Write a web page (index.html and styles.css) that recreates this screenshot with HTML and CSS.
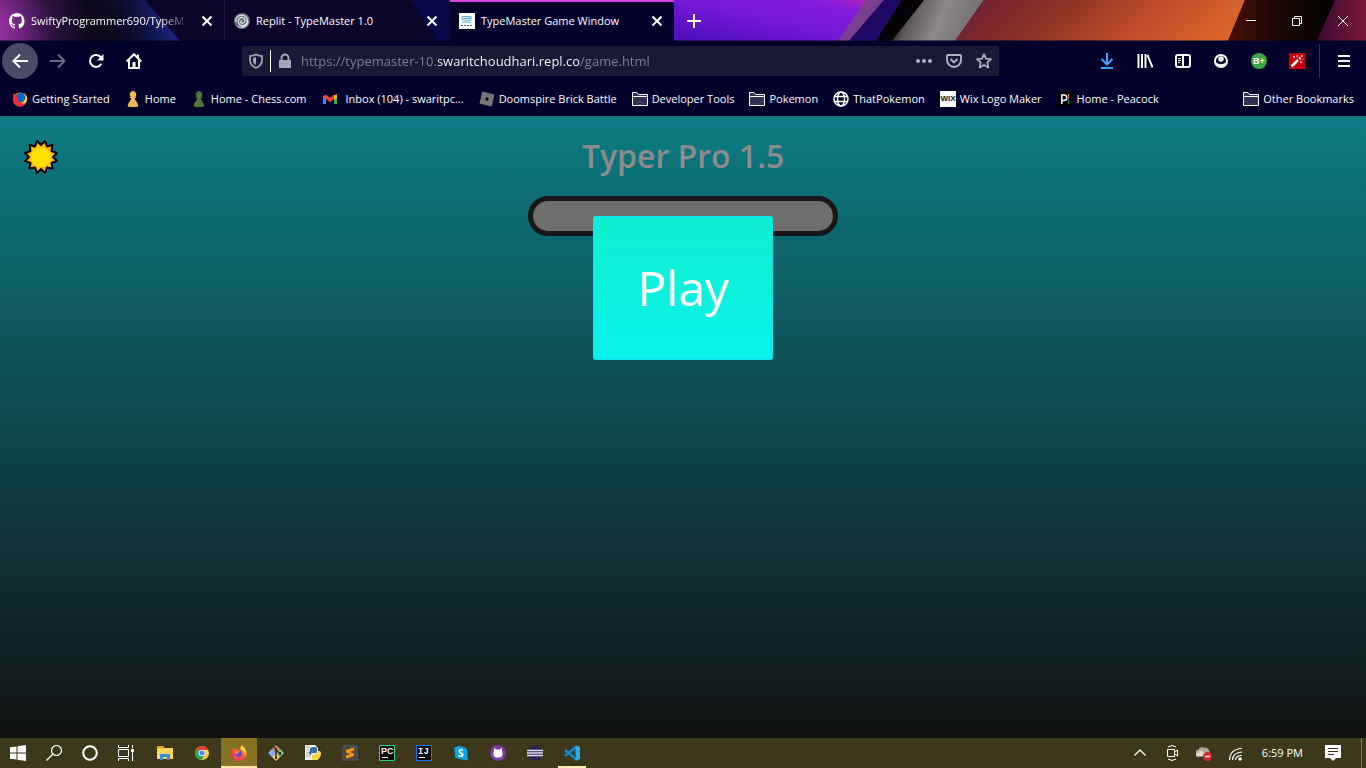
FILE: index.html
```html
<!DOCTYPE html>
<html lang="en">
<head>
<meta charset="utf-8">
<title>TypeMaster Game Window</title>
<link rel="stylesheet" href="styles.css">
</head>
<body>
<svg class="defs" aria-hidden="true">
  <defs>
    <linearGradient id="fire" x1="0" y1="1" x2="1" y2="0"><stop offset="0" stop-color="#f0258c"/><stop offset=".5" stop-color="#ff5a2c"/><stop offset="1" stop-color="#ffdf30"/></linearGradient>
    <symbol id="close" viewBox="0 0 16 16"><path d="M3.500 3.500 12.500 12.500M12.500 3.500 3.500 12.500" fill="none" stroke="#fff" stroke-width="2"/></symbol>
    <symbol id="folder" viewBox="0 0 16 16"><path d="M.5 14.500V1.500H5L6.500 3.500H15.500V14.500Z" fill="#33305a" stroke="#fff"/><path d="M.5 5.500H15.500" stroke="#fff"/></symbol>
    <symbol id="pawn" viewBox="0 0 16 16"><path d="M8 0a3.400 3.400 0 0 1 2.500 5.600L11.500 7H9.800C10 10 13 11 13.300 15.500Q8 17 2.700 15.500C3 11 6 10 6.200 7H4.500L5.500 5.600A3.400 3.400 0 0 1 8 0Z"/></symbol>
    <symbol id="firefox" viewBox="0 0 16 16"><path d="M.3 8.500C.3 5.500 1.500 3.500 2.500 2.500L3.500 4.500 5.500 3.200 6.500 5 9 4.500C8.500 2.500 10 1 11.500.2 12 2.500 15.800 4.500 15.800 8.500A7.700 7.400 0 0 1 .3 8.500Z" fill="url(#fire)"/><circle cx="8.200" cy="8.800" r="3.200" fill="#7b45d8"/><path d="M3.500 6C6 4.800 7.500 6.300 9 6.500 8 7.800 6.800 7.300 6.600 9 4.500 9 3.500 8 3.500 6Z" fill="#ff9a28"/><path d="M11.500.2C12 2.500 15.500 4.500 15 9 14.300 7 13 5.500 10 4.500 9.500 3 10.300 1 11.500.2Z" fill="#ffe047"/></symbol>
  </defs>
</svg>

<header class="browser">
  <div class="titlebar">
    <svg class="theme" viewBox="0 0 1366 41" preserveAspectRatio="none" aria-hidden="true">
      <defs>
        <radialGradient id="pink" gradientUnits="userSpaceOnUse" cx="-15" cy="30" r="105"><stop offset="0" stop-color="#b63bbd"/><stop offset=".3" stop-color="#782785"/><stop offset=".65" stop-color="#2b1240"/><stop offset="1" stop-color="#0b0718"/></radialGradient>
        <linearGradient id="blueedge" gradientUnits="userSpaceOnUse" x1="100" y1="35" x2="165" y2="12"><stop offset="0" stop-color="#0a0820" stop-opacity="0"/><stop offset="1" stop-color="#17257e"/></linearGradient>
        <linearGradient id="violet" x1="0" y1="1" x2="1" y2="0"><stop offset="0" stop-color="#4b0fb8"/><stop offset=".5" stop-color="#7318d5"/><stop offset=".85" stop-color="#881bdc"/><stop offset="1" stop-color="#b226b8"/></linearGradient>
        <linearGradient id="orange" x1="0" y1="0" x2="1" y2=".15"><stop offset="0" stop-color="#6d1d36"/><stop offset=".35" stop-color="#863025"/><stop offset=".7" stop-color="#bd4b29"/><stop offset="1" stop-color="#d7632b"/></linearGradient>
        <linearGradient id="silver" gradientUnits="userSpaceOnUse" x1="893" y1="10" x2="965" y2="40"><stop offset="0" stop-color="#080808"/><stop offset=".25" stop-color="#5d595c"/><stop offset=".6" stop-color="#8d898b"/><stop offset="1" stop-color="#757174"/></linearGradient>
        <linearGradient id="ember" x1="0" x2="1"><stop offset="0" stop-color="#4b1008"/><stop offset=".5" stop-color="#170502"/><stop offset="1" stop-color="#030101"/></linearGradient>
        <linearGradient id="wine" x1="0" x2="1"><stop offset="0" stop-color="#3b0932"/><stop offset="1" stop-color="#7a1838"/></linearGradient>
      </defs>
      <path fill="#0c0329" d="M0 0H1366V41H0Z"/>
      <path fill="url(#pink)" d="M0 0H145L180 41H0Z"/>
      <path fill="url(#blueedge)" d="M70 0H145L180 41H70Z"/>
      <path fill="#080846" d="M410 0H450V41H437Z"/>
      <path fill="url(#violet)" d="M674 0H870L840 41H674Z"/>
      <path fill="#7a4090" d="M866 0H884L849 41H838Z"/>
      <path fill="#210765" d="M884 0H902L876 41H849Z"/>
      <path fill="#060307" d="M902 0H935L910 41H876Z"/>
      <path fill="url(#silver)" d="M924 0H984L955 41H892Z"/>
      <path fill="url(#orange)" d="M984 0H1245L1228 41H955Z"/>
      <path fill="url(#ember)" d="M1245 0H1335L1317 41H1228Z"/>
      <path fill="url(#wine)" d="M1335 0H1366V41H1317Z"/>
      <path stroke="#1b1440" d="M224.500 0V41"/>
      <path stroke="#09051f" stroke-opacity=".5" d="M0 40.500H1366"/>
    </svg>
    <div class="tabs" role="tablist">
      <div class="tab" role="tab">
        <svg class="i16" viewBox="0 0 16 16"><path fill="#fff" d="M8 0C3.580 0 0 3.580 0 8c0 3.540 2.290 6.530 5.470 7.590.4.070.55-.17.55-.38v-1.500c-2 .4-2.600-.5-2.800-1-.1-.3-.6-1-.9-1.200-.3-.2-.7-.6 0-.6.6 0 1.100.6 1.200.8.7 1.200 1.900.9 2.300.7.1-.5.300-.9.500-1.100-1.800-.2-3.600-.9-3.600-4 0-.9.300-1.600.8-2.100-.1-.2-.4-1 .1-2.100 0 0 .7-.2 2.200.8a7.500 7.500 0 0 1 4 0c1.500-1 2.200-.8 2.200-.8.4 1.100.2 1.900.1 2.100.5.600.8 1.300.8 2.100 0 3.100-1.900 3.800-3.700 4 .3.300.6.700.6 1.500v2.200c0 .2.100.5.600.4A8 8 0 0 0 8 0Z"/></svg>
        <span class="tab-title fade">SwiftyProgrammer690/TypeM</span>
        <button class="tab-close" aria-label="Close tab"><svg class="i16"><use href="#close"/></svg></button>
      </div>
      <div class="tab" role="tab">
        <svg class="i16" viewBox="0 0 16 16"><circle cx="8" cy="8" r="8" fill="#65727d"/><path d="M2 9C1 4 6 1 10 2.500S14.500 10 11 12 4 11.500 4.300 8 8 3.500 10 5.300 10.800 10 8.500 10.300 6.300 8.500 7.500 7.500M4 13.500C8 15.500 14 13 14 8" fill="none" stroke="#dfe5e8" stroke-width="1.200"/></svg>
        <span class="tab-title">Replit - TypeMaster 1.0</span>
        <button class="tab-close" aria-label="Close tab"><svg class="i16"><use href="#close"/></svg></button>
      </div>
      <div class="tab active" role="tab" aria-selected="true">
        <svg class="i16" viewBox="0 0 16 16"><path fill="#fff" d="M0 0H16V16H0Z"/><path d="M3 3.500H11L13 4.500 10.500 6M3 4C2 7 5 8.500 9 8 11 8 13 7 11.500 5.500H4" fill="#d3edf6" stroke="#58a9cb"/><path d="M3 9.500H12" stroke="#8ccbe2"/><path d="M2 12.500H14" stroke="#345d87" stroke-dasharray="2 1"/></svg>
        <span class="tab-title">TypeMaster Game Window</span>
        <button class="tab-close" aria-label="Close tab"><svg class="i16"><use href="#close"/></svg></button>
      </div>
    </div>
    <button class="new-tab" aria-label="New tab"><svg class="i16" viewBox="0 0 16 16"><path d="M8 1V15M1 8H15" stroke="#fff" stroke-width="2"/></svg></button>
    <div class="window-controls">
      <button aria-label="Minimize"><svg class="i16" viewBox="0 0 16 16"><path d="M3 7.500H13" stroke="#fff"/></svg></button>
      <button aria-label="Restore"><svg class="i16" viewBox="0 0 16 16"><path d="M3.500 5.500H10.500V12.500H3.500ZM5.500 5V3.500H12.500V10.500H11" fill="none" stroke="#fff"/></svg></button>
      <button aria-label="Close window"><svg class="i16" viewBox="0 0 16 16"><path d="M3 3 13 13M13 3 3 13" stroke="#fff"/></svg></button>
    </div>
  </div>

  <nav class="toolbar" aria-label="Navigation">
    <button class="tool back" aria-label="Back"><svg class="i16" viewBox="0 0 16 16"><path d="M8 1.500 1.500 8 8 14.500M1.500 8H16" fill="none" stroke="#fff" stroke-width="2"/></svg></button>
    <button class="tool" aria-label="Forward"><svg class="i16" viewBox="0 0 16 16"><path d="M8 1.500 14.500 8 8 14.500M14.500 8H0" fill="none" stroke="#6b6b83" stroke-width="2"/></svg></button>
    <button class="tool" aria-label="Reload"><svg class="i16" viewBox="0 0 16 16"><path d="M13 4.500A6 6 0 1 0 13.300 10.800" fill="none" stroke="#fff" stroke-width="2"/><path d="M15.500 1V7.500H9Z" fill="#fff"/></svg></button>
    <button class="tool" aria-label="Home"><svg class="i16" viewBox="0 0 16 16"><path d="M.7 8.500 8 1.200 15.300 8.500M3 7V15H13V7" fill="none" stroke="#fff" stroke-width="2"/><path d="M6.500 15V9H9.500V15ZM11 1.500H13V6L11 4Z" fill="#fff"/></svg></button>
    <div class="urlbar">
      <svg class="i16" viewBox="0 0 16 16"><path d="M8 1.500C10 2.500 12 3 14 3V7C14 11 11.500 13.500 8 15 4.500 13.500 2 11 2 7V3C4 3 6 2.500 8 1.500Z" fill="none" stroke="#a5a5b5" stroke-width="1.700"/><path d="M8 4 5 5V7.500C5 9.500 6 11 8 12Z" fill="#a5a5b5"/></svg>
      <span class="url-divider"></span>
      <svg class="i16" viewBox="0 0 16 16"><path d="M2 7H14V15H2Z" fill="#a5a5b5"/><path d="M4.500 8V5a3.500 3.500 0 0 1 7 0V8" fill="none" stroke="#a5a5b5" stroke-width="2"/></svg>
      <input class="url" type="text" aria-label="Address" value="https://typemaster-10.swaritchoudhari.repl.co/game.html">
      <div class="url-actions">
        <button aria-label="Page actions"><svg class="i16" viewBox="0 0 16 16"><g fill="#b1b1bf"><circle cx="2" cy="8" r="2"/><circle cx="8" cy="8" r="2"/><circle cx="14" cy="8" r="2"/></g></svg></button>
        <button aria-label="Save to Pocket"><svg class="i16" viewBox="0 0 16 16"><path d="M2 2H14Q15 2 15 3V7A7 7 0 0 1 1 7V3Q1 2 2 2ZM4.500 6 8 9.500 11.500 6" fill="none" stroke="#b1b1bf" stroke-width="1.900"/></svg></button>
        <button aria-label="Bookmark this page"><svg class="i16" viewBox="0 0 16 16"><path d="M8 1.300 10 5.700 15 6.200 11.300 9.600 12.300 14.500 8 12 3.700 14.500 4.700 9.600 1 6.200 6 5.700Z" fill="none" stroke="#b1b1bf" stroke-width="1.800" stroke-linejoin="round"/></svg></button>
      </div>
    </div>
    <button class="tool" aria-label="Downloads"><svg class="i16" viewBox="0 0 16 16"><path d="M8 0V11M2.500 6 8 11.500 13.500 6M2 15H14" fill="none" stroke="#3ea3ff" stroke-width="2"/></svg></button>
    <button class="tool" aria-label="Library"><svg class="i16" viewBox="0 0 16 16"><path d="M1.500 1V15M5 1V15M8.500 1V15M10.500 2 15.500 14.500" stroke="#fff" stroke-width="2"/></svg></button>
    <button class="tool" aria-label="Sidebars"><svg class="i16" viewBox="0 0 16 16"><rect x="1" y="2" width="14" height="12" rx="2" fill="none" stroke="#fff" stroke-width="2"/><path d="M8 2V14" stroke="#fff" stroke-width="2"/><path d="M3 5.500H6M3 7.500H6M3 9.500H5" stroke="#fff"/></svg></button>
    <button class="tool" aria-label="Account"><svg class="i16" viewBox="0 0 16 16"><circle cx="8" cy="8" r="6" fill="none" stroke="#fff" stroke-width="2"/><circle cx="8" cy="6" r="2.800" fill="#fff"/><path d="M3 9.500Q8 13 13 9.500Q12 13.500 8 13.500T3 9.500Z" fill="#fff"/></svg></button>
    <button class="tool" aria-label="B+ extension"><svg class="i16" viewBox="0 0 16 16"><circle cx="8" cy="8" r="8" fill="#3ba648"/><text x="8" y="11" text-anchor="middle" class="badge-text">B+</text></svg></button>
    <button class="tool" aria-label="Magic extension"><svg class="i16" viewBox="0 0 16 16"><path d="M0 0H16V16H0Z" fill="#c60000"/><path d="M2.500 13.500 9 7" stroke="#fff" stroke-width="2.500"/><path d="M10 6 11.500 4.500" stroke="#fff" stroke-width="2.500"/><path d="M5 3V5M4 4H6M8 2V4M13 2V4M12 3H14M12 8V10M11 9H13M14 6V7" stroke="#ffcaca"/></svg></button>
    <span class="tool-divider"></span>
    <button class="tool" aria-label="Open menu"><svg class="i16" viewBox="0 0 16 16"><path d="M2 3H14M2 8H14M2 13H14" stroke="#fff" stroke-width="2"/></svg></button>
  </nav>

  <nav class="bookmarks" aria-label="Bookmarks">
    <a href="#"><svg class="i16" viewBox="0 0 16 16"><circle cx="8" cy="8.500" r="7" fill="#ff8519"/><circle cx="8.500" cy="7" r="5" fill="#0866cc"/><path d="M2 2C1 5 0 9 2 12 5 17 12 16 14 12 12 13 9.500 12 9 11 6 11.500 5 9 7.500 8 5.500 8 4 6 5.500 5 4 4 3 4 2 2Z" fill="#ed2b3c"/><path d="M11 1C15 5 14 10 9 12 13 14 16 10 15 6Q14 3 11 1Z" fill="#ffc921"/></svg>Getting Started</a>
    <a href="#"><svg class="i16 gold"><use href="#pawn"/></svg>Home</a>
    <a href="#"><svg class="i16 green"><use href="#pawn"/></svg>Home - Chess.com</a>
    <a href="#" class="mail"><svg class="i16" viewBox="0 0 16 16"><path d="M1 4V13H4V7Z" fill="#4285f4"/><path d="M12 7V13H15V4Z" fill="#34a853"/><path d="M2.500 4.500 8 9 13.500 4.500" fill="none" stroke="#ea4335" stroke-width="3.500"/><path d="M12 5 15 3V7L12 9Z" fill="#fbbc04"/></svg>Inbox (104) - swaritpc...</a>
    <a href="#"><svg class="i16" viewBox="0 0 16 16"><path d="M3.300.5 15.500 3.500 12.700 15.500.5 12.500Z" fill="#777"/><path d="M7 6.200 9.800 7 9 9.800 6.200 9Z" fill="#00002a"/></svg>Doomspire Brick Battle</a>
    <a href="#"><svg class="i16"><use href="#folder"/></svg>Developer Tools</a>
    <a href="#"><svg class="i16"><use href="#folder"/></svg>Pokemon</a>
    <a href="#"><svg class="i16" viewBox="0 0 16 16"><g fill="none" stroke="#fff" stroke-width="1.500"><circle cx="8" cy="8" r="7"/><ellipse cx="8" cy="8" rx="3.500" ry="7"/><path d="M1.500 5.500H14.500M1.500 10.500H14.500"/></g></svg>ThatPokemon</a>
    <a href="#"><svg class="i16" viewBox="0 0 16 16"><path fill="#fff" d="M0 0H16V16H0Z"/><text x="8" y="10" text-anchor="middle" class="wix-text">WIX</text></svg>Wix Logo Maker</a>
    <a href="#"><svg class="i16" viewBox="0 0 16 16"><path d="M0 0H16V16H0Z"/><path d="M4.800 13V4H7A2.500 2.500 0 0 1 7 9.500H5" fill="none" stroke="#fff" stroke-width="1.500"/><path d="M11.500 3V5" stroke="#e7b33a"/><path d="M11.500 5V7" stroke="#e24a33"/><path d="M11.500 7V9" stroke="#7649b8"/><path d="M11.500 9V11" stroke="#208cc8"/><path d="M11.500 11V13" stroke="#32a45c"/></svg>Home - Peacock</a>
    <a href="#" class="other"><svg class="i16"><use href="#folder"/></svg>Other Bookmarks</a>
  </nav>
</header>

<main class="game">
  <button class="theme-toggle" aria-label="Toggle theme">
    <svg viewBox="-18 -18 36 36"><path d="M0-12 4-16 6-10.500 11.500-12 10.500-6 16-4 12 0 16 4 10.500 6 11.500 11.500 6 10.500 4 16 0 12-4 16-6 10.500-11.500 11.500-10.500 6-16 4-12 0-16-4-10.500-6-11.500-12-6-10.500-4-16Z" fill="#ffb70d" stroke="#000" stroke-width="2" stroke-linejoin="round"/><circle r="10" fill="#ffe000"/></svg>
  </button>
  <h1>Typer Pro 1.5</h1>
  <div class="meter"></div>
  <button class="play">Play</button>
</main>

<footer class="taskbar">
  <div class="system">
    <button aria-label="Start"><svg class="i16" viewBox="0 0 16 16"><path fill="#fff" d="M0 2.300 6.500 1.400V7.500H0ZM7.500 1.200 16 0V7.500H7.500ZM0 8.500H6.500V14.600L0 13.700ZM7.500 8.500H16V16L7.500 14.800Z"/></svg></button>
    <button aria-label="Search"><svg class="i16" viewBox="0 0 16 16"><circle cx="10.500" cy="5.500" r="5" fill="none" stroke="#fff" stroke-width="1.200"/><path d="M7 9 .5 15.500" stroke="#fff" stroke-width="1.300"/></svg></button>
    <button aria-label="Cortana"><svg class="i16" viewBox="0 0 16 16"><circle cx="8" cy="8" r="6.800" fill="none" stroke="#fff" stroke-width="2"/></svg></button>
    <button aria-label="Task view"><svg class="i16" viewBox="0 0 16 16"><path d="M.5 0V2.500H10.500V0M.5 16V13.500H10.500V16M.5 4.500H10.500V11.500H.5ZM14.500 0V3M14.500 7V16" fill="none" stroke="#fff"/><path fill="#fff" d="M13 4H16V7H13Z"/></svg></button>
  </div>
  <div class="apps">
    <button aria-label="File Explorer"><svg class="i16" viewBox="0 0 16 16"><path d="M0 1H6L7.500 3H16V14H0Z" fill="#ffd35a"/><path d="M0 1H6L7 3.500H0Z" fill="#e8a310"/><path d="M3 15V9H13V15H10V12H6V15Z" fill="#3292df"/></svg></button>
    <button aria-label="Chrome"><svg class="i16" viewBox="0 0 16 16"><circle cx="8" cy="8" r="7" fill="#ffcd40"/><path d="M8 8 2 4.400A7 7 0 0 1 14.200 5H8Z" fill="#e44232"/><path d="M2 4.400A7 7 0 0 0 7.500 15L11 9.500 8 8Z" fill="#31a354"/><circle cx="8" cy="8" r="3.300" fill="#fff"/><circle cx="8" cy="8" r="2.500" fill="#438cf5"/></svg></button>
    <button class="current" aria-label="Firefox"><svg class="i16"><use href="#firefox"/></svg></button>
    <button aria-label="Git"><svg class="i16" viewBox="0 0 16 16"><path d="M8 0 12 4 8 8 4 4Z" fill="#ef7f77"/><path d="M4 4 8 8 4 12 0 8Z" fill="#85b2ed"/><path d="M12 4 16 8 12 12 8 8Z" fill="#8ac56e"/><path d="M4 12 8 8 12 12 8 16Z" fill="#f4d873"/><path d="M6 2 8 4V14M8 5 12 8.500" fill="none" stroke="#322e25" stroke-width="1.500"/><path d="M7 3H9V5H7ZM11 7H13V10H11ZM7 11H9V14H7Z" fill="#322e25"/></svg></button>
    <button aria-label="Python"><svg class="i16" viewBox="0 0 16 16"><path fill="#eee" d="M0 0H10L13 3V15H0Z"/><path d="M1 2H5M1 5H4M1 8H4M1 11H5" stroke="#aaa"/><path d="M5 6V4Q5 2 9 2T12 4V7Q12 8 10 8H7Q6 8 6 10H5Q3 7 5 6Z" fill="#3470a1"/><path d="M7 13V11Q7 9 9 9H11Q13 9 13 6H15Q17 9 15 12 14 15 10 15 7 15 7 13Z" fill="#ffd53d"/></svg></button>
    <button aria-label="Sublime Text"><svg class="i16" viewBox="0 0 16 16"><rect width="16" height="16" rx="1" fill="#4a4a4a"/><path d="M4 5 12 2.500V5.500L7.500 7 12 8.500V11L4 13.500V10.500L8.500 9 4 7.500Z" fill="#ff9800"/></svg></button>
    <button aria-label="PyCharm"><svg class="i16" viewBox="0 0 16 16"><path fill="#000" stroke="#21d789" d="M.5.500H15.500V15.500H.5Z"/><text x="2" y="9" class="ide-text">PC</text><path d="M3 12.500H9" stroke="#fff"/></svg></button>
    <button aria-label="IntelliJ IDEA"><svg class="i16" viewBox="0 0 16 16"><path fill="#000" stroke="#087cfa" d="M.5.500H15.500V15.500H.5Z"/><text x="2" y="9" class="ide-text mono">IJ</text><path d="M3 12.500H9" stroke="#fff"/></svg></button>
    <button aria-label="Skype"><svg class="i16" viewBox="0 0 16 16"><path d="M5 1Q9 1 12 2.500T14.500 8 15 14 9 14.500 2 12 1.500 6 1.500 2 5 1Z" fill="#0ba4e8"/><text x="5" y="12" class="skype-text">S</text></svg></button>
    <button aria-label="GitHub Desktop"><svg class="i16" viewBox="0 0 16 16"><circle cx="8" cy="8" r="8" fill="#7b3ea2"/><path d="M4 3 6.500 4.500H9.500L12 3V6Q14 11 10 12.500H6Q2 11 4 6Z" fill="#fff"/></svg></button>
    <button aria-label="Eclipse"><svg class="i16" viewBox="0 0 16 16"><circle cx="8" cy="8" r="7.500" fill="#2c2255"/><path d="M0 5.500H16M0 8H16M0 10.500H16" stroke="#e4e1ef" stroke-width="1.300"/></svg></button>
    <button class="running" aria-label="Visual Studio Code"><svg class="i16" viewBox="0 0 16 16"><path d="M12 2 1 11M12 14 1 5" stroke="#1687d0" stroke-width="2.500"/><path d="M11.500 0 16 2V14L11.500 16Z" fill="#2da9f2"/></svg></button>
  </div>
  <div class="tray">
    <button aria-label="Show hidden icons"><svg class="i16" viewBox="0 0 16 16"><path d="M2.500 10.500 8 5 13.500 10.500" fill="none" stroke="#fff" stroke-width="1.300"/></svg></button>
    <button aria-label="Meet Now"><svg class="i16" viewBox="0 0 16 16"><path d="M3.500 4.500H10.500V11.500H3.500ZM10.500 7 13.500 5V11L10.500 9M4 2Q8-1 12 2M4 14Q8 17 12 14" fill="none" stroke="#fff"/></svg></button>
    <button aria-label="OneDrive"><svg class="i16" viewBox="0 0 16 16"><path d="M2 12A3.500 3.500 0 0 1 2 5Q4 1 8 2.500 12 2 13 5.500 15 8 13 11Z" fill="#a9a69b"/><path d="M0 9 5 5 11 11H1Z" fill="#dedbd1"/><circle cx="11.500" cy="11.500" r="4.500" fill="#dc2632"/><path d="M9 11.500H14" stroke="#fff" stroke-width="1.500"/></svg></button>
    <button aria-label="Wi-Fi"><svg class="i16" viewBox="0 0 16 16"><path d="M1.500 15Q2 4 14 3.500M4.500 15Q5 7.500 14 7M7.500 15Q8 10.500 14 10.500" fill="none" stroke="#fff" stroke-width="1.200"/><circle cx="12" cy="14" r="1.800" fill="#fff"/></svg></button>
    <time>6:59 PM</time>
    <button aria-label="Notifications"><svg class="i16" viewBox="0 0 16 16"><path d="M0 0H16V13H11L8 16 5 13H0Z" fill="#fff"/><path d="M3 3.500H13M3 6.500H13M3 9.500H9" stroke="#3a341b"/></svg></button>
    <span class="desktop-edge"></span>
  </div>
</footer>
</body>
</html>
```
FILE: styles.css
```css
* { box-sizing: border-box; }
body {
  margin: 0;
  min-height: 100vh;
  display: flex;
  flex-direction: column;
  background: #111;
  color: #fff;
  font: 12px/16px "Open Sans", "Noto Sans", sans-serif;
}
button {
  display: flex;
  align-items: center;
  justify-content: center;
  margin: 0;
  padding: 0;
  border: 0;
  background: none;
  color: inherit;
  font: inherit;
}
a { color: inherit; text-decoration: none; }
.defs { position: absolute; width: 0; height: 0; }
.i16 { display: block; flex: none; width: 16px; height: 16px; }
.gold { fill: #f0b957; }
.green { fill: #4e7837; }
.badge-text { font: bold 9px "Liberation Sans", sans-serif; fill: #fff; }
.wix-text { font: bold 8px "Liberation Sans", sans-serif; fill: #111; }
.ide-text { font: bold 9px "Liberation Sans", sans-serif; fill: #fff; }
.mono { font-family: "Liberation Mono", monospace; }
.skype-text { font: bold 10px "Open Sans", sans-serif; fill: #fff; }

.browser { background: #00002a; }
.titlebar { position: relative; display: flex; height: 41px; }
.theme { position: absolute; inset: 0; width: 100%; height: 100%; }
.tabs, .new-tab, .window-controls { position: relative; }
.tabs { display: flex; gap: 1px; }
.tab { display: flex; align-items: center; width: 224px; padding: 2px 9px; }
.tab.active { background: #00002a; border-top: 2px solid #d83fdc; padding-top: 0; }
.tab-title {
  flex: 1;
  min-width: 0;
  margin: 0 8px 0 6px;
  white-space: nowrap;
  font-size: 11px;
  line-height: 18px;
}
.fade { mask-image: linear-gradient(90deg, #000 80%, transparent); }
.new-tab { width: 40px; }
.window-controls { display: flex; margin-left: auto; }
.window-controls button { width: 46px; }

.toolbar { display: flex; align-items: center; gap: 2px; height: 40px; padding: 0 4px 0 2px; }
.tool { flex: none; width: 36px; height: 36px; }
.back { border-radius: 50%; background: #4b4b68; }
.urlbar {
  display: flex;
  align-items: center;
  flex: 1;
  height: 30px;
  margin: 0 88px;
  padding: 0 7px 0 6px;
  background: #191935;
}
.url-divider { width: 1px; height: 22px; margin: 0 6px; background: #fff; }
.url {
  flex: 1;
  min-width: 0;
  margin-left: 8px;
  padding: 0;
  border: 0;
  outline: 0;
  font: 13px/20px "Open Sans", "Noto Sans", sans-serif;
  color: transparent;
  background: linear-gradient(90deg, #808090 137px, #fff 137px 279px, #808090 279px);
  background-clip: text;
}
.url-actions { display: flex; gap: 14px; }
.tool-divider { width: 1px; height: 34px; margin: 0 4px 0 2px; background: #30305a; }

.bookmarks { display: flex; align-items: center; gap: 15px; height: 35px; padding: 0 12px; font-size: 11px; }
.bookmarks a { display: flex; align-items: center; gap: 4px; white-space: nowrap; }
.bookmarks .mail { gap: 8px; }
.bookmarks .other { margin-left: auto; }

.game {
  flex: 1;
  position: relative;
  display: flex;
  flex-direction: column;
  align-items: center;
  padding-top: 20px;
  background: linear-gradient(#0c7b83, #111);
  font-family: "Open Sans", "Noto Sans", sans-serif;
}
.theme-toggle { position: absolute; top: 23px; left: 23px; }
.theme-toggle svg { width: 36px; height: 36px; }
h1 { margin: 0; font-size: 32px; font-weight: 600; line-height: 40px; color: #8c8c8c; }
.meter {
  width: 310px;
  height: 40px;
  margin-top: 20px;
  border: 5px solid #171717;
  border-radius: 20px;
  background: #6e6e6e;
}
.play {
  z-index: 1;
  width: 180px;
  height: 144px;
  margin-top: -20px;
  border: 2px solid #0be8ee;
  border-radius: 3px;
  background: linear-gradient(#10efcf, #09f3eb);
  font-size: 48px;
  font-weight: 500;
}

.taskbar { display: flex; height: 30px; background: #3d371c; }
.system, .apps, .tray { display: flex; }
.system button { width: 36px; }
.apps { gap: 1px; margin-left: 3px; }
.apps button { width: 36px; }
.apps .current { background: #857224; box-shadow: inset 0 -2px #ffe9a8; }
.apps .running { background: linear-gradient(#ffe9a8, #ffe9a8) center bottom / 28px 2px no-repeat; }
.tray { align-items: center; margin-left: auto; }
.tray button { width: 32px; height: 30px; }
.tray time { margin: 0 14px 0 10px; font-size: 11px; }
.desktop-edge { width: 1px; height: 30px; margin: 0 4px 0 12px; background: #817c69; }
```
